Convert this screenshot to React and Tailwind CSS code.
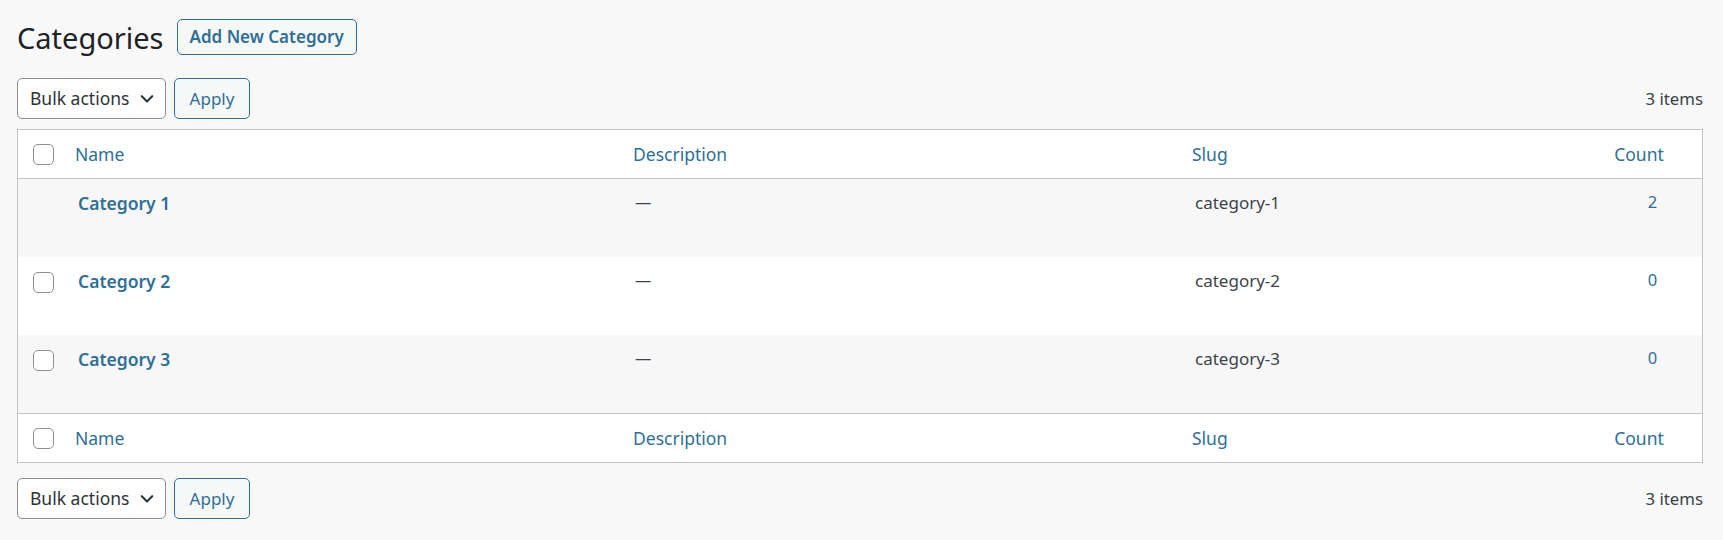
import React from 'react';

const rows = [
  { id: 1, name: 'Category 1', slug: 'category-1', count: 2, locked: true },
  { id: 2, name: 'Category 2', slug: 'category-2', count: 0 },
  { id: 3, name: 'Category 3', slug: 'category-3', count: 0 },
];

const cols = 'grid grid-cols-[47px_558px_559px_421px_1fr]';

const Checkbox = () => (
  <span className="block w-[21px] h-[21px] rounded-[5px] border border-[#8c8f94] bg-white" />
);

const Chevron = () => (
  <svg width="16" height="16" viewBox="0 0 20 20" fill="none" className="shrink-0">
    <path d="M3.5 6.5l6.5 6.5 6.5-6.5" stroke="#2c3338" strokeWidth="2.6" strokeLinecap="round" strokeLinejoin="round" />
  </svg>
);

const TableNav = () => (
  <div className="flex items-center h-[41px]">
    <div className="flex items-center justify-between w-[149px] h-[41px] pl-[12px] pr-[10px] bg-white border border-[#8c8f94] rounded-[5px] text-[17.5px] text-[#2c3338]">
      <span>Bulk actions</span>
      <Chevron />
    </div>
    <div className="ml-[8px] flex items-center justify-center w-[76px] h-[41px] border border-[#2e6f98] rounded-[5px] bg-[#f6f7f7] text-[17px] text-[#2e6f98]">
      Apply
    </div>
    <div className="ml-auto text-[16.8px] text-[#3c434a]">3 items</div>
  </div>
);

const HeadRow = ({ border }) => (
  <div className={`${cols} h-[49px] items-center bg-white text-[17.5px] text-[#2e6f98] ${border}`}>
    <div className="pl-[15px]"><Checkbox /></div>
    <div className="pl-[10px]">Name</div>
    <div className="pl-[10px]">Description</div>
    <div className="pl-[10px]">Slug</div>
    <div className="flex justify-center">
      <span className="pr-[27px]">Count</span>
    </div>
  </div>
);

export default function App() {
  return (
    <div className="min-h-screen bg-[#f8f8f8] pl-[17px] pr-[20px] pt-[19px] font-['Noto_Sans','Open_Sans',sans-serif]">
      <div className="flex items-center h-[36px]">
        <h1 className="text-[29px] leading-none font-normal text-[#1d2327]">Categories</h1>
        <div className="ml-[13px] flex items-center h-[36px] px-[12px] border border-[#2e6f98] rounded-[5px] bg-[#f6f7f7] text-[17px] font-semibold text-[#2e6f98]">
          Add New Category
        </div>
      </div>

      <div className="mt-[23px]">
        <TableNav />
      </div>

      <div className="mt-[10px] border border-[#c3c4c7]">
        <HeadRow border="border-b border-[#c3c4c7]" />
        {rows.map((row, i) => (
          <div key={row.id} className={`${cols} h-[78px] ${i % 2 === 0 ? 'bg-[#f7f7f7]' : 'bg-white'}`}>
            <div className="pl-[15px] pt-[15px]">{!row.locked && <Checkbox />}</div>
            <div className="pl-[13px] pt-[11px] text-[17.5px] font-semibold text-[#2e6f98]">{row.name}</div>
            <div className="pl-[12px] pt-[11px] text-[16.25px] text-[#3c434a]">—</div>
            <div className="pl-[13px] pt-[11px] text-[17px] text-[#3c434a]">{row.slug}</div>
            <div className="pt-[11px] text-center text-[16.5px] text-[#2e6f98]">{row.count}</div>
          </div>
        ))}
        <HeadRow border="border-t border-[#c3c4c7]" />
      </div>

      <div className="mt-[15px] pb-[22px]">
        <TableNav />
      </div>
    </div>
  );
}
